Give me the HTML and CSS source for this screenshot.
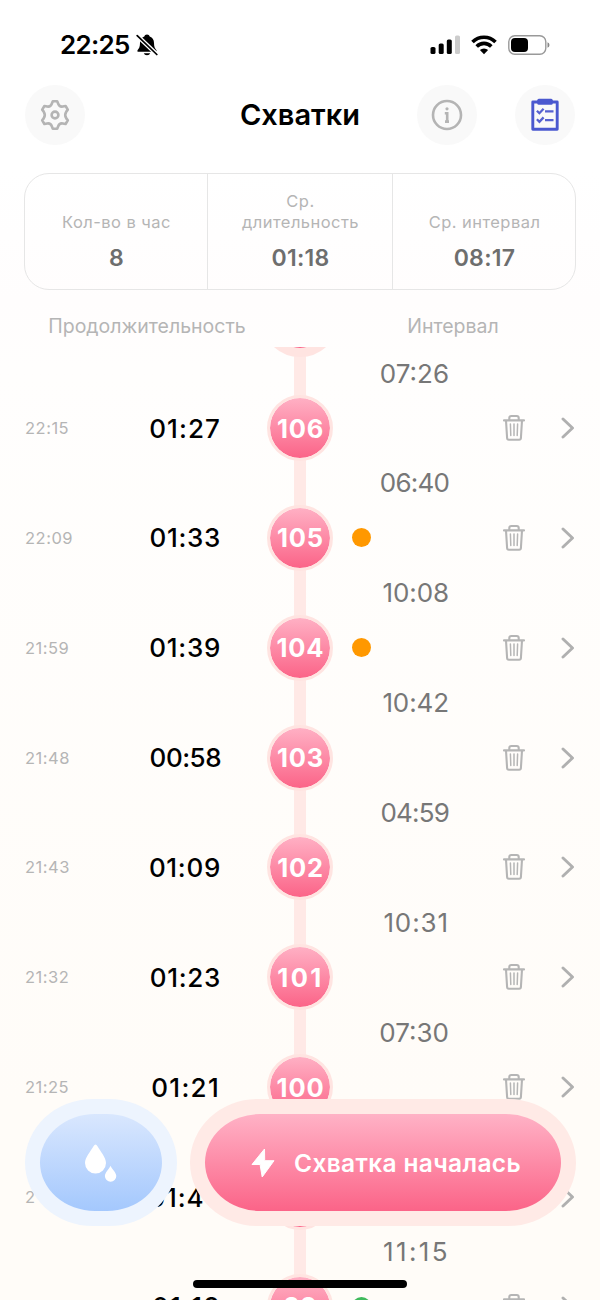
FILE: index.html
```html
<!DOCTYPE html>
<html lang="ru">
<head>
<meta charset="utf-8">
<title>Схватки</title>
<link rel="stylesheet" href="styles.css">
</head>
<body>
<svg class="defs" width="0" height="0" aria-hidden="true">
  <symbol id="trash" viewBox="0 0 24 28">
    <g fill="none" stroke="#b5b5b5" stroke-linecap="round" stroke-linejoin="round">
      <path stroke-width="2.1" d="M2 6.4H22M4 6.5L5.1 24Q5.200 25.700 6.800 25.700H17.200Q18.800 25.700 18.900 24L20 6.500M7.300 6V4Q7.300 2 9.300 2H14.700Q16.700 2 16.700 4V6"/>
      <path stroke-width="1.500" d="M8.400 10L8.800 21.500M12 10V21.500M15.600 10L15.200 21.500"/>
    </g>
  </symbol>
  <symbol id="chevron" viewBox="0 0 14 22">
    <path fill="none" stroke="#b0b0b0" stroke-width="2.900" stroke-linecap="round" stroke-linejoin="round" d="M2 2L11.500 11L2 20"/>
  </symbol>
</svg>
<div class="screen">
  <header class="status">
    <div class="clock"><span class="clock-text">22:25</span>
      <svg width="22" height="24" viewBox="0 0 22 24"><path d="M11 1.500c-1.400 0-2.400.8-2.700 2C5.400 4.600 4 7 4 10c0 4-1 5.500-2.300 7-.7.900-.3 1.800.7 1.800h17.200c1 0 1.400-.9.7-1.800C19 15.500 18 14 18 10c0-3-1.400-5.400-4.300-6.500-.3-1.200-1.300-2-2.700-2zM7.800 20.200a3.300 2.600 0 0 0 6.400 0z"/><path stroke="#fff" stroke-width="4.400" d="M.5 2L21.500 22"/><path stroke="#000" stroke-width="1.700" stroke-linecap="round" d="M1.200 2.700L20.800 21.500"/></svg>
    </div>
    <div class="signals">
      <svg width="30" height="20" viewBox="0 0 30 20"><rect x="0.500" y="12" width="5" height="7" rx="1.600"/><rect x="8.700" y="8.500" width="5" height="10.500" rx="1.600"/><rect x="16.800" y="4.500" width="5" height="14.500" rx="1.600"/><rect x="25" y="0.500" width="5" height="18.500" rx="1.600" fill="#ccc"/></svg>
      <svg width="26" height="20" viewBox="0 0 26 20"><g fill="none" stroke="#000" stroke-width="3.600"><path d="M1.500 7.100A16.200 16.200 0 0 1 24.500 7.100"/><path d="M5.700 11.400A10.300 10.300 0 0 1 20.300 11.400"/></g><path d="M13 19.300L8.900 15.100a5.800 5.800 0 0 1 8.200 0z"/></svg>
      <svg width="42" height="20" viewBox="0 0 42 20"><rect x="0.800" y="0.800" width="37" height="18.400" rx="6" fill="none" stroke="#999" stroke-width="1.400"/><rect x="3" y="3" width="17" height="14" rx="4"/><path fill="#888" d="M39.500 7.200Q41.500 8 41.500 10T39.500 12.800z"/></svg>
    </div>
  </header>
  <nav class="nav">
    <div class="round-btn">
      <svg width="32" height="32" viewBox="0 0 32 32" fill="none" stroke="#b4b4b4" stroke-width="2.600" stroke-linejoin="round"><path d="M13.800 2.200H18.200L19.200 4.800C20 7 21.600 7.900 23.800 7.500L26.600 7L28.800 10.600L27.300 12.600C26 14.600 26 17.400 27.300 19.400L28.800 21.400L26.600 25L23.800 24.500C21.600 24.100 20 25 19.200 27.200L18.200 29.800H13.800L12.800 27.200C12 25 10.400 24.100 8.200 24.500L5.400 25L3.200 21.400L4.700 19.400C6 17.400 6 14.600 4.700 12.600L3.200 10.600L5.400 7L8.200 7.500C10.400 7.900 12 7 12.800 4.800Z"/><circle cx="16" cy="16" r="3.400"/></svg>
    </div>
    <h1 class="title">Схватки</h1>
    <div class="nav-right">
      <div class="round-btn">
        <svg width="32" height="32" viewBox="0 0 32 32" fill="none" stroke="#b4b4b4"><circle cx="16" cy="16" r="14" stroke-width="2.600"/><path stroke-width="2.600" d="M13.800 14.200H16.200V22.500M14 22.600H18"/><circle cx="16" cy="9.800" r="1.600" fill="#b4b4b4" stroke="none"/></svg>
      </div>
      <div class="round-btn">
        <svg width="30" height="34" viewBox="0 0 30 34"><path fill="none" stroke="#4a58cf" stroke-width="2.900" stroke-linejoin="round" d="M2.800 4H27.200V31.300H2.800Z"/><rect x="7.300" y="0.800" width="15.400" height="6" rx="1.500" fill="#4a58cf"/><path fill="none" stroke="#5661d0" stroke-width="2.300" d="M6.900 12.700L9.400 15.200L13.600 10.800M6.900 21.300L9.400 23.800L13.600 19.400M15 13.400H23.500M15 22.200H23.500"/></svg>
      </div>
    </div>
  </nav>
  <section class="stats">
    <div class="stat"><span class="stat-label">Кол-во в час</span><span class="stat-value">8</span></div>
    <div class="stat"><span class="stat-label">Ср.<br>длительность</span><span class="stat-value">01:18</span></div>
    <div class="stat"><span class="stat-label">Ср. интервал</span><span class="stat-value">08:17</span></div>
  </section>
  <div class="heads"><span class="head-a">Продолжительность</span><span class="head-b">Интервал</span></div>
  <main class="list">
    <div class="row first"><span class="ball big"></span></div>
    <div class="gap"><span class="interval seven">07:26</span></div>
    <div class="row"><span class="time">22:15</span><span class="dur one seven">01:27</span><span class="ball one">106</span><span class="mark"></span><svg class="trash"><use href="#trash"/></svg><svg class="chev"><use href="#chevron"/></svg></div>
    <div class="gap"><span class="interval">06:40</span></div>
    <div class="row"><span class="time">22:09</span><span class="dur one">01:33</span><span class="ball one">105</span><span class="mark orange"></span><svg class="trash"><use href="#trash"/></svg><svg class="chev"><use href="#chevron"/></svg></div>
    <div class="gap"><span class="interval one">10:08</span></div>
    <div class="row"><span class="time">21:59</span><span class="dur one">01:39</span><span class="ball one">104</span><span class="mark orange"></span><svg class="trash"><use href="#trash"/></svg><svg class="chev"><use href="#chevron"/></svg></div>
    <div class="gap"><span class="interval one">10:42</span></div>
    <div class="row"><span class="time">21:48</span><span class="dur">00:58</span><span class="ball one">103</span><span class="mark"></span><svg class="trash"><use href="#trash"/></svg><svg class="chev"><use href="#chevron"/></svg></div>
    <div class="gap"><span class="interval">04:59</span></div>
    <div class="row"><span class="time">21:43</span><span class="dur one">01:09</span><span class="ball one">102</span><span class="mark"></span><svg class="trash"><use href="#trash"/></svg><svg class="chev"><use href="#chevron"/></svg></div>
    <div class="gap"><span class="interval two">10:31</span></div>
    <div class="row"><span class="time">21:32</span><span class="dur one">01:23</span><span class="ball two">101</span><span class="mark"></span><svg class="trash"><use href="#trash"/></svg><svg class="chev"><use href="#chevron"/></svg></div>
    <div class="gap"><span class="interval seven">07:30</span></div>
    <div class="row"><span class="time">21:25</span><span class="dur two">01:21</span><span class="ball one">100</span><span class="mark"></span><svg class="trash"><use href="#trash"/></svg><svg class="chev"><use href="#chevron"/></svg></div>
    <div class="gap"></div>
    <div class="row"><span class="time">2</span><span class="dur covered">01:4</span><span class="ball"></span><span class="mark"></span><svg class="trash"><use href="#trash"/></svg><svg class="chev"><use href="#chevron"/></svg></div>
    <div class="gap"><span class="interval three">11:15</span></div>
    <div class="row"><span class="time"></span><span class="dur two last">01:18</span><span class="ball">98</span><span class="mark green"></span><svg class="trash"><use href="#trash"/></svg><svg class="chev"><use href="#chevron"/></svg></div>
  </main>
  <footer class="actions">
    <div class="action water"><div class="action-in">
      <svg width="34" height="40" viewBox="0 0 34 40" fill="#fff"><path d="M12.500 1.500Q13.500 1.500 14.500 3.200C17.500 8.500 23 14.500 23 20A10.500 10.500 0 0 1 2 20C2 14.500 7.500 8.500 10.500 3.200Q11.500 1.500 12.500 1.500Z"/><path d="M27.500 22.700C28.800 25.800 33.300 29.500 33.300 33A5.700 5.700 0 0 1 21.900 33C21.900 29.500 26.200 25.800 27.500 22.700Z"/></svg>
    </div></div>
    <div class="action start"><div class="action-in">
      <svg width="24" height="30" viewBox="0 0 24 30" fill="#fff" stroke="#fff" stroke-width="1" stroke-linejoin="round"><path d="M13.500 1L1 16.500H9.300V18L11.200 29L23 12.700H13.700Z"/></svg>
      <span class="start-text">Схватка началась</span>
    </div></div>
  </footer>
  <div class="home"></div>
</div>
</body>
</html>
```
FILE: styles.css
```css
* { box-sizing: border-box; }
body { margin: 0; font-family: Inter, "Liberation Sans", sans-serif; }
.defs { display: block; }
.screen {
  position: relative; width: 600px; height: 1300px; overflow: hidden;
  display: flex; flex-direction: column;
  background: linear-gradient(#fff 0, #fff 170px, #fffdfd 300px, #fffefd 370px, #fffcf8 1100px, #fffcf8 100%);
}
.status { height: 85px; flex: none; padding: 4px 50px 0 60px; display: flex; justify-content: space-between; align-items: center; }
.clock { display: flex; align-items: center; gap: 5px; }
.clock-text { width: 71px; font-size: 26px; font-weight: 600; letter-spacing: -.7px; white-space: nowrap; }
.signals { display: flex; align-items: center; gap: 11px; }
.nav { height: 60px; flex: none; padding: 0 25px; display: grid; grid-template-columns: 158px 1fr 158px; align-items: center; }
.round-btn { width: 60px; height: 60px; border-radius: 50%; background: #f9f9f9; display: flex; align-items: center; justify-content: center; }
.nav-right { display: flex; justify-content: space-between; }
.title { margin: 0 0 2px; font-size: 29px; font-weight: 600; text-align: center; white-space: nowrap; }
.stats { flex: none; margin: 28px 24px 0; height: 117px; border: 1.5px solid #e6e6e6; border-radius: 25px; display: grid; grid-template-columns: 182px 185px 1fr; }
.stat { display: flex; flex-direction: column; align-items: center; justify-content: flex-end; padding: 0 0 17px 1px; gap: 11px; text-align: center; }
.stat + .stat { border-left: 1.5px solid #e6e6e6; }
.stat-label { font-size: 16.5px; line-height: 21px; color: #b5b5b5; letter-spacing: .45px; }
.stat-value { font-size: 23px; line-height: 28px; font-weight: 600; color: #6e6e6e; letter-spacing: .3px; }
.heads { height: 57px; flex: none; display: grid; grid-template-columns: 294px 318px; padding-top: 24px; margin-right: -12px; font-size: 19.5px; line-height: 25px; text-align: center; color: #b5b5b5; }
.list {
  flex: 1; min-height: 0; overflow: hidden;
  background: linear-gradient(#ffe9e6, #ffe9e6) 294px 0 / 12px 100% no-repeat;
}
.row { height: 66px; padding-left: 25px; display: grid; grid-template-columns: 95px 101px 46px 66px 19px 19px 131px 26px 33px 16px; align-items: center; }
.first { height: 78px; margin-top: -68px; padding-left: 261px; display: block; }
.gap { height: 43.86px; display: flex; align-items: center; }
.first + .gap { height: 38px; padding-bottom: 5px; }
.interval { width: 449px; text-align: right; font-size: 26px; color: #777; letter-spacing: -.8px; }
.interval.seven { letter-spacing: 0; }
.interval.one { letter-spacing: -.1px; }
.interval.two { letter-spacing: .9px; }
.interval.three { width: 450px; letter-spacing: 2.4px; }
.time { grid-column: 1; font-size: 16.5px; color: #b5b5b5; letter-spacing: .5px; }
.dur { grid-column: 2; font-size: 26px; font-weight: 500; text-align: right; letter-spacing: -.5px; }
.dur.one { letter-spacing: .7px; }
.dur.one.seven { letter-spacing: 1.1px; }
.dur.two { letter-spacing: 1.3px; padding-right: 1px; }
.dur.last { padding-right: 0; }
.dur.covered { letter-spacing: .9px; padding-right: 16.5px; }
.ball {
  grid-column: 4; width: 66px; height: 66px; border-radius: 50%; border: 3px solid #ffe4e1;
  background: linear-gradient(#ffb0c4, #fb6488) padding-box;
  display: flex; align-items: center; justify-content: center;
  color: #fff; font-size: 25.5px; font-weight: 700;
}
.ball.one { letter-spacing: .8px; padding-left: 1px; }
.ball.two { letter-spacing: 2.5px; padding-left: 1px; }
.big { width: 78px; height: 78px; border-width: 9px; }
.mark { grid-column: 6; width: 19px; height: 19px; border-radius: 50%; }
.orange { background: #ff9800; }
.green { background: #3fba5c; }
.trash { grid-column: 8; width: 24px; height: 28px; }
.chev { grid-column: 10; width: 14px; height: 22px; }
.actions { position: absolute; left: 24.5px; right: 24.5px; top: 1099px; display: flex; justify-content: space-between; }
.action { height: 127px; padding: 15px; border-radius: 68px / 63.5px; }
.action-in { height: 97px; border-radius: 55px / 48.5px; display: flex; align-items: center; justify-content: center; }
.water { width: 152px; background: #edf4fe; }
.water .action-in { background: linear-gradient(#d9e7fe, #a4c8fd); padding-right: 2px; }
.start { width: 386px; background: #ffeae6; }
.start .action-in { gap: 19px; background: linear-gradient(#ffb2c6, #fb6488); padding-left: 7px; }
.start-text { color: #fff; font-size: 24.5px; font-weight: 600; letter-spacing: .35px; white-space: nowrap; }
.home { position: absolute; left: 193px; top: 1280px; width: 214px; height: 8px; border-radius: 4px; background: #000; }
```
